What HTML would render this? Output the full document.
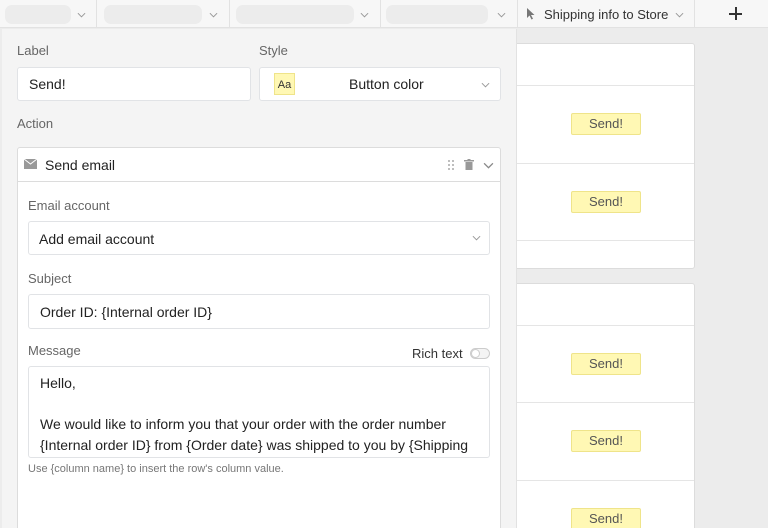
<!DOCTYPE html>
<html><head><style>
*{box-sizing:border-box;margin:0;padding:0}
html,body{width:768px;height:528px;overflow:hidden}
body{background:#ececec;font-family:"Liberation Sans",sans-serif;position:relative;color:#222}
.a{position:absolute}
.hdr{left:0;top:0;width:768px;height:28px;background:#f7f7f7;border-bottom:1px solid #e2e2e2}
.div{top:0;height:28px;width:1px;background:#e2e2e2}
.pill{top:5px;height:19px;background:#ececec;border-radius:7px}
.lbl{font-size:13px;color:#666}
.inp{background:#fff;border:1px solid #e1e3e6;border-radius:3px;font-size:14px;color:#222}
.card{background:#fff;border:1px solid #dcdcdc;border-radius:3px}
.btn{width:70px;height:22px;background:#fff8b4;border:1px solid #efe48a;border-radius:2px;font-size:13px;color:#555;text-align:center;line-height:20px}
</style></head><body>
<svg width="0" height="0" style="position:absolute"><defs><symbol id="cv" viewBox="0 0 10 6"><path d="M1 1 L5 5 L9 1" fill="none" stroke="#999" stroke-width="1.1"/></symbol></defs></svg>
<div class="a hdr"></div>
<div class="a pill" style="left:5px;width:66px"></div><svg class="a" style="left:77px;top:12px" width="9" height="6"><use href="#cv"/></svg>
<div class="a div" style="left:96px"></div>
<div class="a pill" style="left:104px;width:98px"></div><svg class="a" style="left:209px;top:12px" width="9" height="6"><use href="#cv"/></svg>
<div class="a div" style="left:229px"></div>
<div class="a pill" style="left:236px;width:118px"></div><svg class="a" style="left:360px;top:12px" width="9" height="6"><use href="#cv"/></svg>
<div class="a div" style="left:380px"></div>
<div class="a pill" style="left:386px;width:102px"></div><svg class="a" style="left:497px;top:12px" width="9" height="6"><use href="#cv"/></svg>
<div class="a div" style="left:517px"></div>
<svg class="a" style="left:526px;top:8px" width="10" height="12" viewBox="0 0 10 12"><path d="M1 0 L1 10 L3.5 7.5 L5.5 11.5 L7 10.8 L5 7 L8.5 7 Z" fill="#777"/></svg>
<div class="a" style="left:544px;top:7px;font-size:13px;color:#333">Shipping info to Store</div>
<svg class="a" style="left:675px;top:12px" width="9" height="6"><use href="#cv"/></svg>
<div class="a div" style="left:694px"></div>
<div class="a" style="left:729px;top:8px;width:13px;height:2px;background:#333;top:13px"></div>
<div class="a" style="left:735px;top:7px;width:2px;height:13px;background:#333"></div>

<!-- right cards -->
<div class="a card" style="left:510px;top:43px;width:185px;height:226px"></div>
<div class="a" style="left:517px;top:85px;width:177px;height:1px;background:#e5e5e5"></div>
<div class="a" style="left:517px;top:163px;width:177px;height:1px;background:#e5e5e5"></div>
<div class="a" style="left:517px;top:240px;width:177px;height:1px;background:#e5e5e5"></div>
<div class="a card" style="left:510px;top:283px;width:185px;height:250px"></div>
<div class="a" style="left:517px;top:325px;width:177px;height:1px;background:#e5e5e5"></div>
<div class="a" style="left:517px;top:402px;width:177px;height:1px;background:#e5e5e5"></div>
<div class="a" style="left:517px;top:480px;width:177px;height:1px;background:#e5e5e5"></div>
<div class="a btn" style="left:571px;top:113px">Send!</div>
<div class="a btn" style="left:571px;top:191px">Send!</div>
<div class="a btn" style="left:571px;top:353px">Send!</div>
<div class="a btn" style="left:571px;top:430px">Send!</div>
<div class="a btn" style="left:571px;top:508px">Send!</div>

<!-- panel -->
<div class="a" style="left:2px;top:29px;width:515px;height:499px;background:#f4f4f4;border-right:1px solid #e2e2e2"></div>
<div class="a lbl" style="left:17px;top:43px">Label</div>
<div class="a lbl" style="left:259px;top:43px">Style</div>
<div class="a inp" style="left:17px;top:67px;width:234px;height:34px;padding:8px 0 0 11px">Send!</div>
<div class="a inp" style="left:259px;top:67px;width:242px;height:34px"></div>
<div class="a" style="left:274px;top:73px;width:21px;height:22px;background:#fff8b4;border:1px solid #efe48a;font-size:11px;text-align:center;line-height:22px;color:#333">Aa</div>
<div class="a" style="left:349px;top:76px;font-size:14px">Button color</div>
<svg class="a" style="left:481px;top:82px" width="9" height="6"><use href="#cv"/></svg>
<div class="a lbl" style="left:17px;top:116px">Action</div>
<div class="a" style="left:17px;top:147px;width:484px;height:390px;background:#fff;border:1px solid #dcdcdc;border-radius:3px"></div>
<div class="a" style="left:18px;top:148px;width:482px;height:34px;border-bottom:1px solid #dcdcdc"></div>
<svg class="a" style="left:24px;top:159px" width="13" height="10" viewBox="0 0 13 10"><rect width="13" height="10" fill="#999"/><path d="M0 0 L6.5 5 L13 0" stroke="#fff" fill="none" stroke-width="1"/></svg>
<div class="a" style="left:45px;top:157px;font-size:14px">Send email</div>
<svg class="a" style="left:448px;top:160px" width="6" height="10"><g fill="#aaa"><circle cx="1" cy="1" r="1"/><circle cx="5" cy="1" r="1"/><circle cx="1" cy="5" r="1"/><circle cx="5" cy="5" r="1"/><circle cx="1" cy="9" r="1"/><circle cx="5" cy="9" r="1"/></g></svg>
<svg class="a" style="left:464px;top:159px" width="10" height="11" viewBox="0 0 10 11"><rect x="0" y="1" width="10" height="1.5" fill="#999"/><rect x="3.5" y="0" width="3" height="1.5" fill="#999"/><rect x="1.5" y="3" width="7" height="8" fill="#999"/></svg>
<svg class="a" style="left:483px;top:162px" width="11" height="7" viewBox="0 0 10 6"><path d="M1 1 L5 5 L9 1" fill="none" stroke="#888" stroke-width="1.2"/></svg>
<div class="a lbl" style="left:28px;top:198px">Email account</div>
<div class="a inp" style="left:28px;top:221px;width:462px;height:34px;padding:9px 0 0 10px">Add email account</div>
<svg class="a" style="left:472px;top:235px" width="9" height="6"><use href="#cv"/></svg>
<div class="a lbl" style="left:28px;top:271px">Subject</div>
<div class="a inp" style="left:28px;top:294px;width:462px;height:35px;padding:9px 0 0 11px">Order ID: {Internal order ID}</div>
<div class="a lbl" style="left:28px;top:343px">Message</div>
<div class="a" style="left:412px;top:346px;font-size:13px;color:#333">Rich text</div>
<div class="a" style="left:470px;top:348px;width:20px;height:11px;border:1px solid #ccc;border-radius:6px;background:#f4f4f4"></div>
<div class="a" style="left:471px;top:349px;width:9px;height:9px;border-radius:50%;background:#fff;border:1px solid #ccc"></div>
<div class="a inp" style="left:28px;top:366px;width:462px;height:92px;padding:6px 0 0 11px;line-height:20.5px;overflow:hidden">Hello,<br><br>We would like to inform you that your order with the order number<br>{Internal order ID} from {Order date} was shipped to you by {Shipping</div>
<div class="a" style="left:28px;top:463px;font-size:11px;color:#777">Use {column name} to insert the row's column value.</div>
</body></html>
